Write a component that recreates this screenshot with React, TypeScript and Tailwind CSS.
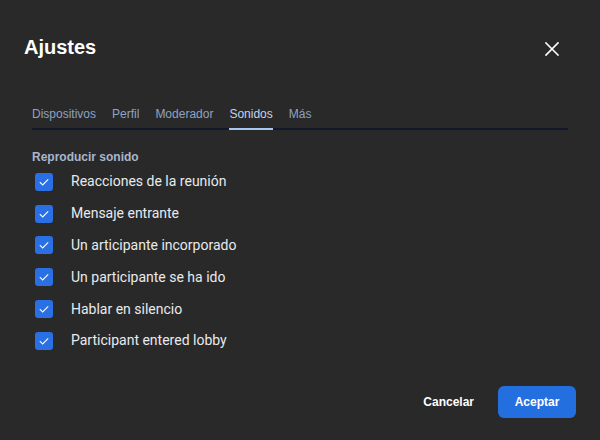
import React from "react";

const items = [
  "Reacciones de la reunión",
  "Mensaje entrante",
  "Un articipante incorporado",
  "Un participante se ha ido",
  "Hablar en silencio",
  "Participant entered lobby",
];

const tabs = ["Dispositivos", "Perfil", "Moderador", "Sonidos", "Más"];

export default function App() {
  return (
    <div className="w-[600px] h-[440px] bg-[#292929] flex flex-col" style={{ fontFamily: '"Liberation Sans", Arial, sans-serif' }}>
      <div className="flex items-center justify-between pl-6 pr-[40px] pt-[34px] h-[62px]">
        <h1 className="text-[20px] font-bold text-white leading-6 -mt-[2px]">Ajustes</h1>
        <svg width="16" height="16" viewBox="0 0 16 16" className="mt-[2px]">
          <path d="M2 2 L14 14 M14 2 L2 14" stroke="#ffffff" strokeWidth="1.6" strokeLinecap="square" />
        </svg>
      </div>
      <div className="mx-8 mt-[40px] flex gap-4 border-b-2 border-[#111827] h-[28px]">
        {tabs.map((t) => (
          <div
            key={t}
            className={
              "text-[12px] leading-[18px] pt-[3px] -mb-[2px] border-b-2 " +
              (t === "Sonidos" ? "text-[#c3d3ec] border-[#a8c7f0]" : "text-[#8fa3c4] border-transparent")
            }
          >
            {t}
          </div>
        ))}
      </div>
      <div className="mx-8 mt-[19px] text-[12px] font-bold text-[#a9b6cc] leading-[16px]">Reproducir sonido</div>
      <div className="ml-[35px] mt-[1px] flex flex-col">
        {items.map((it) => (
          <div key={it} className="flex items-center h-[31.8px]">
            <div className="w-[18px] h-[18px] rounded-[3px] bg-[#2a6fe3] flex items-center justify-center">
              <svg width="12" height="12" viewBox="0 0 12 12">
                <path d="M1.8 6.2 L4.7 9 L10.2 3.3" stroke="#ffffff" strokeWidth="1.1" fill="none" />
              </svg>
            </div>
            <span
              className="ml-[18px] text-[14px] text-[#e8eaee]"
              style={{ fontFamily: 'Roboto, "Liberation Sans", sans-serif' }}
            >
              {it}
            </span>
          </div>
        ))}
      </div>
      <div className="flex-1" />
      <div className="flex justify-end items-center gap-6 pr-6 pb-[22px]">
        <button className="text-[12px] font-bold text-white -mt-[1px]">Cancelar</button>
        <button className="h-[32px] w-[78px] rounded-[6px] bg-[#246fe0] text-[12px] font-bold text-white">Aceptar</button>
      </div>
    </div>
  );
}
